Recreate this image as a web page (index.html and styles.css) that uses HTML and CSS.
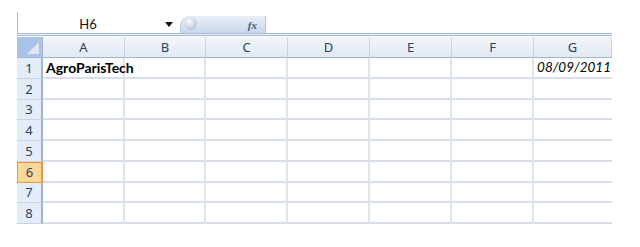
FILE: index.html
```html
<!DOCTYPE html>
<html>
<head>
<meta charset="utf-8">
<link rel="stylesheet" href="styles.css">
</head>
<body>
<div class="app">
  <div class="fbar">
    <div class="namebox">H6</div>
    <div class="dd"><svg width="8" height="5" viewBox="0 0 8 5"><path d="M0 0H8L4 5Z" fill="#111"/></svg></div>
    <div class="pill">
      <span class="knob"></span>
      <span class="fx">fx</span>
    </div>
    <div class="input"></div>
  </div>
  <div class="sep"></div>
  <div class="sheet">
    <div class="corner"><svg width="12" height="12" viewBox="0 0 12 12"><path d="M12 0V12H0Z" fill="#dfe6f0"/></svg></div>
    <div class="ch">A</div><div class="ch">B</div><div class="ch">C</div><div class="ch">D</div><div class="ch">E</div><div class="ch">F</div><div class="ch">G</div>

    <div class="rh">1</div><div class="c bold">AgroParisTech</div><div class="c"></div><div class="c"></div><div class="c"></div><div class="c"></div><div class="c"></div><div class="c date">08/09/2011</div>
    <div class="rh">2</div><div class="c"></div><div class="c"></div><div class="c"></div><div class="c"></div><div class="c"></div><div class="c"></div><div class="c"></div>
    <div class="rh">3</div><div class="c"></div><div class="c"></div><div class="c"></div><div class="c"></div><div class="c"></div><div class="c"></div><div class="c"></div>
    <div class="rh">4</div><div class="c"></div><div class="c"></div><div class="c"></div><div class="c"></div><div class="c"></div><div class="c"></div><div class="c"></div>
    <div class="rh">5</div><div class="c"></div><div class="c"></div><div class="c"></div><div class="c"></div><div class="c"></div><div class="c"></div><div class="c"></div>
    <div class="rh sel">6</div><div class="c"></div><div class="c"></div><div class="c"></div><div class="c"></div><div class="c"></div><div class="c"></div><div class="c"></div>
    <div class="rh">7</div><div class="c"></div><div class="c"></div><div class="c"></div><div class="c"></div><div class="c"></div><div class="c"></div><div class="c"></div>
    <div class="rh">8</div><div class="c"></div><div class="c"></div><div class="c"></div><div class="c"></div><div class="c"></div><div class="c"></div><div class="c"></div>
  </div>
</div>
</body>
</html>
```
FILE: styles.css
```css
html, body { margin: 0; padding: 0; background: #fff; }
body { font-family: Lato, "Noto Sans", sans-serif; font-size: 13px; color: #000; }
.app { width: 595px; margin-left: 17px; padding-top: 12px; }

.fbar { display: flex; align-items: stretch; height: 21px; border-left: 1px solid #a7bad3; }
.namebox { width: 140px; display: flex; align-items: center; justify-content: center; padding-top: 3px; font-size: 13px; color: #111; }
.dd { width: 22px; display: flex; align-items: center; justify-content: center; padding-top: 3px; }
.pill { position: relative; width: 86px; margin-top: 4px; height: 17px; border-radius: 10px 0 0 0;
  background: linear-gradient(#e9eff8, #c9d8ee); border-right: 1px solid #b3c2d6; border-left: 1px solid #b9c9df;
  display: flex; align-items: center; justify-content: flex-end; padding-right: 8px; box-sizing: border-box; }
.knob { position: absolute; left: 3px; top: 1px; width: 13px; height: 13px; border-radius: 50%;
  background: radial-gradient(circle at 40% 35%, #ffffff, #c8ced6 60%, #9ea8b4); }
.fx { font-family: "Liberation Serif", serif; font-style: italic; font-size: 11px; color: #4a5a6e; font-weight: bold; }
.input { flex: 1; }

.sep { height: 1px; border-top: 1px solid #a9bcd5; border-bottom: 1px solid #a9bcd5; background: #e9eef6; margin-bottom: 1px; }

.sheet { display: grid; grid-template-columns: 26px 82px 81px 82px 82px 82px 82px 78px; grid-template-rows: 21px repeat(8, 20.75px); }
.corner { background: #a9c4e8; border-right: 1px solid #9eb6ce; border-bottom: 1px solid #9eb6ce; display: flex; align-items: flex-end; justify-content: flex-end; padding: 0 3px 3px 0; box-sizing: border-box; }
.ch { background: linear-gradient(#f2f5fa, #e2e9f3); border-right: 1px solid #c5d3e6; border-bottom: 1px solid #9eb6ce;
  display: flex; align-items: center; justify-content: center; color: #27415f; font-family: "Noto Sans", sans-serif; font-size: 13px; box-sizing: border-box; }
.ch:last-child { border-right: none; }
.rh { background: #e4ecf7; border-right: 2px solid #9eb6ce; border-bottom: 1px solid #c5d3e6;
  display: flex; align-items: center; justify-content: center; color: #27415f; font-family: "Noto Sans", sans-serif; font-size: 13px; box-sizing: border-box; }
.rh.sel { background: #fcd89b; border: 1px solid #f29536; border-right: 2px solid #f29536; }
.c { border-right: 2px solid #dde3ee; border-bottom: 2px solid #d8dfea; box-sizing: border-box; display: flex; align-items: center; padding: 0 3px; white-space: nowrap; }
.c:nth-child(8n) { border-right: none; }
.bold { font-weight: bold; font-size: 14px; }
.date { font-style: italic; font-size: 13.5px; justify-content: flex-end; padding: 0 1px 0 0; }
```
